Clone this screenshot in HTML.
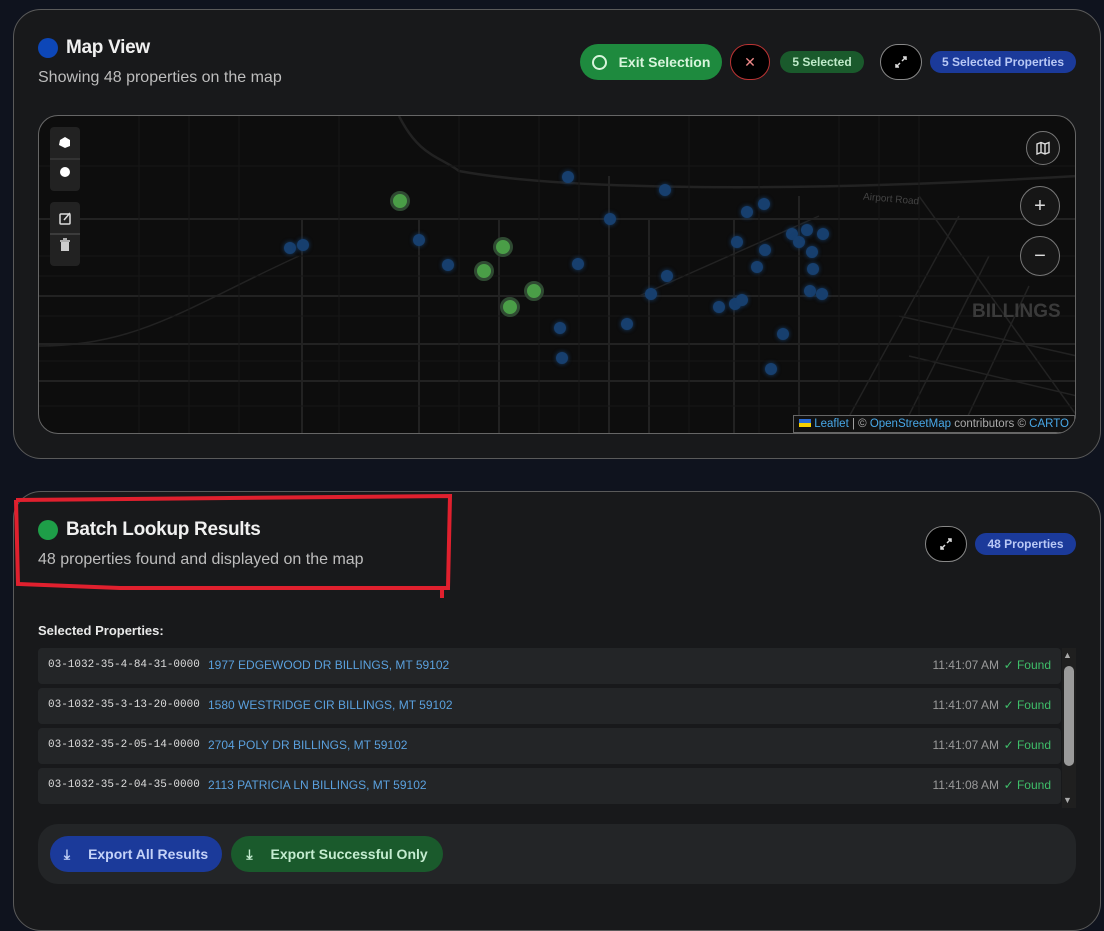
<!DOCTYPE html>
<html><head><meta charset="utf-8"><style>
*{box-sizing:border-box;margin:0;padding:0}
body{width:1104px;height:908px;overflow:hidden;background:#0f131e;font-family:"Liberation Sans",sans-serif;position:relative;color:#eee}
.card{position:absolute;left:13px;width:1088px;background:#18191b;border:1px solid #5a5a5a;border-radius:28px}
.dot{position:absolute;width:20px;height:20px;border-radius:50%}
.h{position:absolute;font-size:19px;font-weight:bold;color:#f0f0f0;letter-spacing:-0.3px}
.sub{position:absolute;font-size:16px;color:#bdbdbd}
.pill{position:absolute;border-radius:20px;font-weight:bold;display:flex;align-items:center;justify-content:center;white-space:nowrap}
.circ{position:absolute;width:42px;height:38px;border-radius:20px;background:#000;display:flex;align-items:center;justify-content:center}
.row{position:absolute;left:38px;width:1023px;height:36px;background:#232527;border-radius:4px;font-size:12px}
.row .id{position:absolute;left:10px;top:11px;font-family:"Liberation Mono",monospace;color:#ddd;font-size:11px}
.row .ad{position:absolute;left:170px;top:10px;color:#5aa0dd}
.row .t{position:absolute;right:62px;top:10px;color:#9a9a9a}
.row .f{position:absolute;right:10px;top:10px;color:#3fbf6a}
.mk{position:absolute;width:12px;height:12px;border-radius:50%;background:#173f6e;box-shadow:0 0 4px #173f6e}
.gm{position:absolute;width:20px;height:20px;border-radius:50%;background:#4a9e47;border:3px solid #2f4a32}
.ctl{position:absolute;width:30px;background:#222;border-radius:4px}
.rc{position:absolute;width:40px;height:40px;border-radius:50%;background:#161616;border:1px solid #777;color:#ddd;display:flex;align-items:center;justify-content:center;font-size:20px}
</style></head><body>

<div class="card" style="top:9px;height:450px"></div>
<div class="dot" style="left:38px;top:38px;background:#0d47b8"></div>
<div class="h" style="left:66px;top:37px">Map View</div>
<div class="sub" style="left:38px;top:69px">Showing 48 properties on the map</div>

<div class="pill" style="left:580px;top:44px;width:142px;height:36px;background:#1e8a3e;color:#d8f5dc;font-size:14px"><span style="width:15px;height:15px;border:2px solid #d8f5dc;border-radius:50%;margin-right:12px"></span>Exit Selection</div>
<div class="circ" style="left:730px;top:44px;width:40px;height:36px;border:1px solid #b33;color:#e88;font-size:14px">✕</div>
<div class="pill" style="left:780px;top:51px;width:84px;height:22px;background:#1a5a2c;color:#bfeac9;font-size:12px">5 Selected</div>
<div class="circ" style="left:880px;top:44px;width:42px;height:36px;border:1px solid #888;color:#ddd;font-size:14px"><svg width="14" height="14" viewBox="0 0 14 14" stroke="#ddd" stroke-width="1.5" fill="none"><path d="M8 6L12 2M9 2h3v3M6 8L2 12M2 9v3h3"/></svg></div>
<div class="pill" style="left:930px;top:51px;width:146px;height:22px;background:#1b3a9a;color:#b8c8f5;font-size:12px">5 Selected Properties</div>

<div style="position:absolute;left:38px;top:115px;width:1038px;height:319px;background:#0d0d0d;border:1px solid #666;border-radius:20px;overflow:hidden">
<svg width="1038" height="319" style="position:absolute;left:0;top:0" stroke="#222" fill="none" stroke-width="1.5">
<path d="M0 103H1038M0 228H1038M0 265H1038M0 180H1038" stroke-width="2"/>
<path d="M263 103V319M380 103V319M460 103V319M570 60V319M610 103V319M695 103V319M760 80V319" stroke-width="2"/>
<path d="M360 0C380 40 400 40 420 55C500 70 700 80 1038 60" stroke-width="2.5"/>
<path d="M0 230C100 230 150 190 260 140"/>
<path d="M880 80L1038 300M920 100L800 319M950 140L860 319M990 170L920 319M860 200L1038 240M870 240L1038 280"/>
<path d="M600 180L780 100"/>
<g stroke="#161616" stroke-width="1"><path d="M0 50H1038M0 140H1038M0 160H1038M0 200H1038M0 245H1038M0 290H1038M100 0V319M150 0V319M200 0V319M300 0V319M420 0V319M500 0V319M540 0V319M650 0V319M720 0V319M800 0V319M840 0V319M880 0V319"/></g>
</svg>
<div style="position:absolute;left:933px;top:185px;font-size:19px;font-weight:bold;color:#3a3a3a">BILLINGS</div>
<div style="position:absolute;left:824px;top:78px;font-size:10px;color:#444;transform:rotate(5deg)">Airport Road</div>
<div class="gm" style="left:351px;top:75px"></div>
<div class="gm" style="left:454px;top:121px"></div>
<div class="gm" style="left:435px;top:145px"></div>
<div class="gm" style="left:485px;top:165px"></div>
<div class="gm" style="left:461px;top:181px"></div>
<div class="mk" style="left:245px;top:126px"></div><div class="mk" style="left:258px;top:123px"></div>
<div class="mk" style="left:374px;top:118px"></div><div class="mk" style="left:403px;top:143px"></div>
<div class="mk" style="left:523px;top:55px"></div><div class="mk" style="left:620px;top:68px"></div>
<div class="mk" style="left:565px;top:97px"></div><div class="mk" style="left:533px;top:142px"></div>
<div class="mk" style="left:622px;top:154px"></div><div class="mk" style="left:606px;top:172px"></div>
<div class="mk" style="left:702px;top:90px"></div><div class="mk" style="left:719px;top:82px"></div>
<div class="mk" style="left:692px;top:120px"></div><div class="mk" style="left:720px;top:128px"></div>
<div class="mk" style="left:712px;top:145px"></div><div class="mk" style="left:747px;top:112px"></div>
<div class="mk" style="left:754px;top:120px"></div><div class="mk" style="left:762px;top:108px"></div>
<div class="mk" style="left:778px;top:112px"></div><div class="mk" style="left:767px;top:130px"></div>
<div class="mk" style="left:768px;top:147px"></div><div class="mk" style="left:765px;top:169px"></div>
<div class="mk" style="left:777px;top:172px"></div><div class="mk" style="left:674px;top:185px"></div>
<div class="mk" style="left:690px;top:182px"></div><div class="mk" style="left:697px;top:178px"></div>
<div class="mk" style="left:582px;top:202px"></div><div class="mk" style="left:515px;top:206px"></div>
<div class="mk" style="left:738px;top:212px"></div><div class="mk" style="left:517px;top:236px"></div>
<div class="mk" style="left:726px;top:247px"></div>
<div class="ctl" style="left:11px;top:11px;height:64px"><svg width="30" height="64"><path d="M15 21l-6-3 1-5 5-3 5 3v6z" fill="#fff"/><line x1="0" y1="32" x2="30" y2="32" stroke="#444"/><circle cx="15" cy="45" r="5" fill="#fff"/></svg></div>
<div class="ctl" style="left:11px;top:86px;height:64px"><svg width="30" height="64" stroke="#ddd" fill="none" stroke-width="1.5"><rect x="10" y="12" width="10" height="10" rx="1"/><path d="M14 18l6-7"/><line x1="0" y1="32" x2="30" y2="32" stroke="#444"/><rect x="11" y="40" width="8" height="9" fill="#ccc" stroke="none"/><path d="M10 39h10M13 37h4"/></svg></div>
<div class="rc" style="left:987px;top:15px;width:34px;height:34px;font-size:13px"><svg width="14" height="14" viewBox="0 0 14 14" fill="none" stroke="#ddd" stroke-width="1.4"><path d="M1 3l4-1.5 4 1.5 4-1.5v10l-4 1.5-4-1.5-4 1.5zM5 1.5v10M9 3v10"/></svg></div>
<div class="rc" style="left:981px;top:70px">+</div>
<div class="rc" style="left:981px;top:120px">−</div>
<div style="position:absolute;right:0;bottom:0;height:18px;background:#111;border:1px solid #666;padding:2px 5px;font-size:11.5px;color:#aaa;white-space:nowrap"><span style="display:inline-block;width:12px;height:8px;background:linear-gradient(#2b6cd6 50%,#f5d000 50%)"></span> <span style="color:#48a8e8">Leaflet</span> | © <span style="color:#48a8e8">OpenStreetMap</span> contributors © <span style="color:#48a8e8">CARTO</span></div>
</div>

<div class="card" style="top:491px;height:440px"></div>
<div class="dot" style="left:38px;top:520px;background:#1e9e48"></div>
<div class="h" style="left:66px;top:519px">Batch Lookup Results</div>
<div class="sub" style="left:38px;top:551px">48 properties found and displayed on the map</div>
<svg style="position:absolute;left:0;top:490px" width="470" height="120" fill="none" stroke="#e0202e" stroke-width="4"><path d="M16 10L450 6L448 98L120 98L18 94L16 10M442 98l0 10"/></svg>
<div class="circ" style="left:925px;top:526px;width:42px;height:36px;border:1px solid #888"><svg width="14" height="14" viewBox="0 0 14 14" stroke="#ddd" stroke-width="1.5" fill="none"><path d="M8 6L12 2M9 2h3v3M6 8L2 12M2 9v3h3"/></svg></div>
<div class="pill" style="left:975px;top:533px;width:101px;height:22px;background:#1b3a9a;color:#b8c8f5;font-size:12px">48 Properties</div>

<div style="position:absolute;left:38px;top:623px;font-size:13px;font-weight:bold;color:#e8e8e8">Selected Properties:</div>
<div class="row" style="top:648px"><span class="id">03-1032-35-4-84-31-0000</span><span class="ad">1977 EDGEWOOD DR BILLINGS, MT 59102</span><span class="t">11:41:07 AM</span><span class="f">✓ Found</span></div>
<div class="row" style="top:688px"><span class="id">03-1032-35-3-13-20-0000</span><span class="ad">1580 WESTRIDGE CIR BILLINGS, MT 59102</span><span class="t">11:41:07 AM</span><span class="f">✓ Found</span></div>
<div class="row" style="top:728px"><span class="id">03-1032-35-2-05-14-0000</span><span class="ad">2704 POLY DR BILLINGS, MT 59102</span><span class="t">11:41:07 AM</span><span class="f">✓ Found</span></div>
<div class="row" style="top:768px"><span class="id">03-1032-35-2-04-35-0000</span><span class="ad">2113 PATRICIA LN BILLINGS, MT 59102</span><span class="t">11:41:08 AM</span><span class="f">✓ Found</span></div>
<div style="position:absolute;left:1062px;top:648px;width:14px;height:160px;background:#1f1f1f"></div>
<div style="position:absolute;left:1064px;top:666px;width:10px;height:100px;background:#9a9a9a;border-radius:5px"></div>
<div style="position:absolute;left:1063px;top:650px;font-size:9px;color:#aaa">▲</div>
<div style="position:absolute;left:1063px;top:795px;font-size:9px;color:#aaa">▼</div>

<div style="position:absolute;left:38px;top:824px;width:1038px;height:60px;background:#232527;border-radius:20px"></div>
<div class="pill" style="left:50px;top:836px;width:172px;height:36px;background:#1b3a9a;color:#c4d2f8;font-size:14px"><span style="margin-right:18px;font-size:14px">⤓</span>Export All Results</div>
<div class="pill" style="left:231px;top:836px;width:212px;height:36px;background:#1a5a2c;color:#c4ecd0;font-size:14px"><span style="margin-right:18px;font-size:14px">⤓</span>Export Successful Only</div>
</body></html>
